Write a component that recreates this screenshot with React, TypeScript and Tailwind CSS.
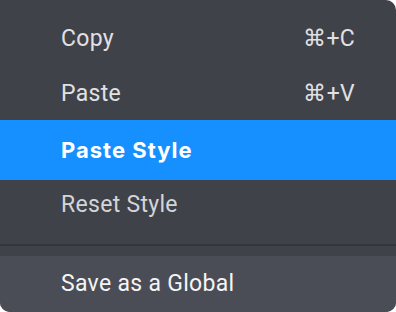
import React from 'react'

function Row({ label, keys, h }: { label: string; keys?: string; h: string }) {
  return (
    <div className={`flex items-center justify-between pl-[61px] pr-[41px] pt-[3px] text-[#e1e1e3] ${h}`}>
      <span>{label}</span>
      {keys && <span>{keys}</span>}
    </div>
  )
}

export default function App() {
  return (
    <div
      className="flex h-[312px] w-[396px] flex-col overflow-hidden rounded-tr-[10px] rounded-b-[10px] bg-[#404249] text-[23px] tracking-[0.3px]"
      style={{ fontFamily: 'Roboto, "Liberation Sans", sans-serif' }}
    >
      <div className="pt-[10px]">
        <Row label="Copy" keys="⌘+C" h="h-[55px]" />
        <Row label="Paste" keys="⌘+V" h="h-[55px]" />
      </div>
      <div
        className="flex h-[60px] items-center bg-[#1690ff] pl-[61px] text-[22px] font-bold tracking-[1px] text-white"
        style={{ fontFamily: 'Inter, Roboto, sans-serif' }}
      >
        Paste Style
      </div>
      <div className="flex h-[50px] items-center pl-[61px] pt-[1px] text-[#d4d5d8]">Reset Style</div>
      <div className="mt-[14px] h-[2px] bg-[#33353a]" />
      <div className="h-[10px]" />
      <div className="flex flex-1 items-center bg-[#4a4d55] pl-[61px] text-[#f4f4f5]">
        Save as a Global
      </div>
    </div>
  )
}
